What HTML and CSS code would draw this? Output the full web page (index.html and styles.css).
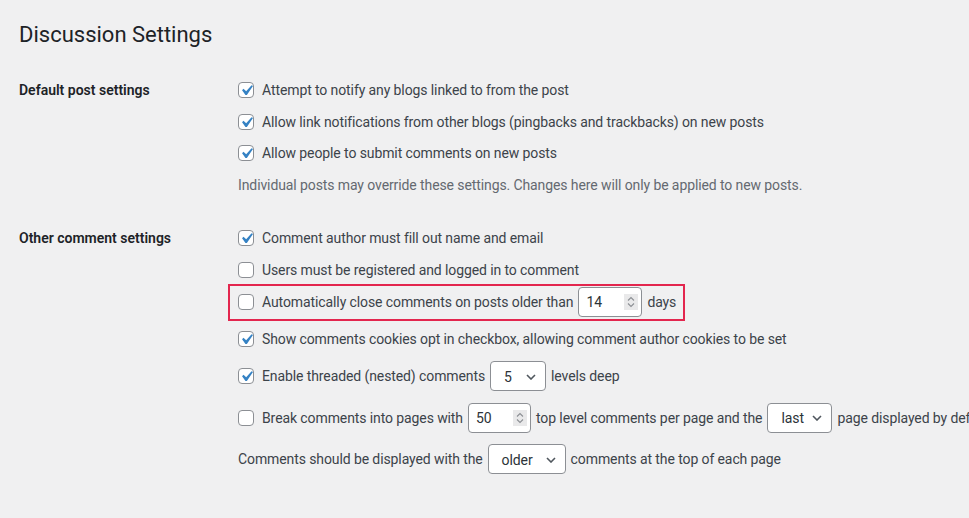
FILE: index.html
```html
<!DOCTYPE html>
<html lang="en">
<head>
<meta charset="utf-8">
<title>Discussion Settings</title>
<link rel="stylesheet" href="styles.css">
</head>
<body>
<div class="page">
  <h1 class="title">Discussion Settings</h1>

  <div class="section first">
    <div class="label">Default post settings</div>
    <div class="rows gap-s">
      <div class="row"><span class="cb on"><svg viewBox="0 0 20 20"><path d="M14.83 4.89l1.34.94-5.81 8.38H9.02L5.78 9.67l1.34-1.25 2.57 2.4z"/></svg></span>Attempt to notify any blogs linked to from the post</div>
      <div class="row"><span class="cb on"><svg viewBox="0 0 20 20"><path d="M14.83 4.89l1.34.94-5.81 8.38H9.02L5.78 9.67l1.34-1.25 2.57 2.4z"/></svg></span>Allow link notifications from other blogs (pingbacks and trackbacks) on new posts</div>
      <div class="row"><span class="cb on"><svg viewBox="0 0 20 20"><path d="M14.83 4.89l1.34.94-5.81 8.38H9.02L5.78 9.67l1.34-1.25 2.57 2.4z"/></svg></span>Allow people to submit comments on new posts</div>
      <div class="row desc">Individual posts may override these settings. Changes here will only be applied to new posts.</div>
    </div>
  </div>

  <div class="section second">
    <div class="label">Other comment settings</div>
    <div class="rows gap-t">
      <div class="row"><span class="cb on"><svg viewBox="0 0 20 20"><path d="M14.83 4.89l1.34.94-5.81 8.38H9.02L5.78 9.67l1.34-1.25 2.57 2.4z"/></svg></span>Comment author must fill out name and email</div>
      <div class="row"><span class="cb"></span>Users must be registered and logged in to comment</div>
      <div class="row highlight"><span class="cb"></span>Automatically close comments on posts older than<span class="num w64"><span class="val">14</span><span class="spin"><svg viewBox="0 0 14 16"><path d="M4 6.5l3-3 3 3M4 9.5l3 3 3-3"/></svg></span></span>days</div>
      <div class="row sp-m"><span class="cb on"><svg viewBox="0 0 20 20"><path d="M14.83 4.89l1.34.94-5.81 8.38H9.02L5.78 9.67l1.34-1.25 2.57 2.4z"/></svg></span>Show comments cookies opt in checkbox, allowing comment author cookies to be set</div>
      <div class="row sp-m"><span class="cb on"><svg viewBox="0 0 20 20"><path d="M14.83 4.89l1.34.94-5.81 8.38H9.02L5.78 9.67l1.34-1.25 2.57 2.4z"/></svg></span>Enable threaded (nested) comments<span class="sel w56"><span class="val">5</span><svg class="chev" viewBox="0 0 10 6"><path d="M1 1l4 4 4-4"/></svg></span>levels deep</div>
      <div class="row sp-l"><span class="cb"></span>Break comments into pages with<span class="num w63"><span class="val">50</span><span class="spin"><svg viewBox="0 0 14 16"><path d="M4 6.5l3-3 3 3M4 9.5l3 3 3-3"/></svg></span></span>top level comments per page and the<span class="sel w65"><span class="val">last</span><svg class="chev" viewBox="0 0 10 6"><path d="M1 1l4 4 4-4"/></svg></span>page displayed by default</div>
      <div class="row sp-l">Comments should be displayed with the<span class="sel w78"><span class="val">older</span><svg class="chev" viewBox="0 0 10 6"><path d="M1 1l4 4 4-4"/></svg></span>comments at the top of each page</div>
    </div>
  </div>
</div>
</body>
</html>
```

FILE: styles.css
```css
html, body {
  margin: 0;
  padding: 0;
  background: #f0f0f1;
  overflow: hidden;
}

body {
  font-family: Roboto, "Noto Sans", "Liberation Sans", sans-serif;
  font-size: 14px;
  color: #3c434a;
  width: 969px;
  height: 518px;
}

.page {
  padding: 20px 0 0 19px;
}

.title {
  margin: 0;
  font-size: 22px;
  font-weight: 400;
  line-height: 29px;
  color: #1d2327;
}

.section {
  display: grid;
  grid-template-columns: 219px auto;
  align-items: start;
}

.section.first {
  margin-top: 26px;
}

.section.second {
  margin-top: 23.5px;
}

.label {
  font-weight: 600;
  color: #1d2327;
  line-height: 30px;
  height: 30px;
}

.rows {
  display: flex;
  flex-direction: column;
}

.rows.gap-s { gap: 1.5px; }
.rows.gap-t { gap: 2px; }

.row {
  display: flex;
  align-items: center;
  height: 30px;
  white-space: nowrap;
  letter-spacing: -0.1px;
}

.row.sp-m { margin-top: 5px; }
.row.sp-l { margin-top: 9.5px; }

.row.desc {
  color: #646970;
}

.row.highlight {
  align-self: flex-start;
  border: 2px solid #e3264e;
  padding: 1px 7px 2px 8px;
  margin: -3px 0 -4px -10px;
}

.cb {
  flex: none;
  width: 16px;
  height: 16px;
  box-sizing: border-box;
  border: 1px solid #8c8f94;
  border-radius: 4px;
  background: #fff;
  margin-right: 8px;
  position: relative;
}

.cb svg {
  position: absolute;
  left: -3px;
  top: -3px;
  width: 21px;
  height: 21px;
  fill: #3582c4;
}

.num, .sel {
  flex: none;
  display: flex;
  align-items: center;
  box-sizing: border-box;
  height: 30px;
  border: 1px solid #8c8f94;
  border-radius: 4px;
  background: #fff;
  color: #2c3338;
  margin: 0 5px 0 5px;
}

.num {
  padding-left: 7px;
  justify-content: space-between;
}

.num .spin {
  width: 14px;
  height: 16px;
  background: #e9e9ea;
  margin-right: 3px;
  display: flex;
}

.num .spin svg {
  width: 14px;
  height: 16px;
  fill: none;
  stroke: #8c8f94;
  stroke-width: 1.1;
}

.sel {
  justify-content: space-between;
  padding: 1px 9px 0 13px;
}

.sel .chev {
  width: 10px;
  height: 6px;
  fill: none;
  stroke: #50575e;
  stroke-width: 1.6;
}

.w64 { width: 64px; }
.w63 { width: 63px; }
.w56 { width: 56px; }
.w65 { width: 65px; }
.w78 { width: 78px; }
```
